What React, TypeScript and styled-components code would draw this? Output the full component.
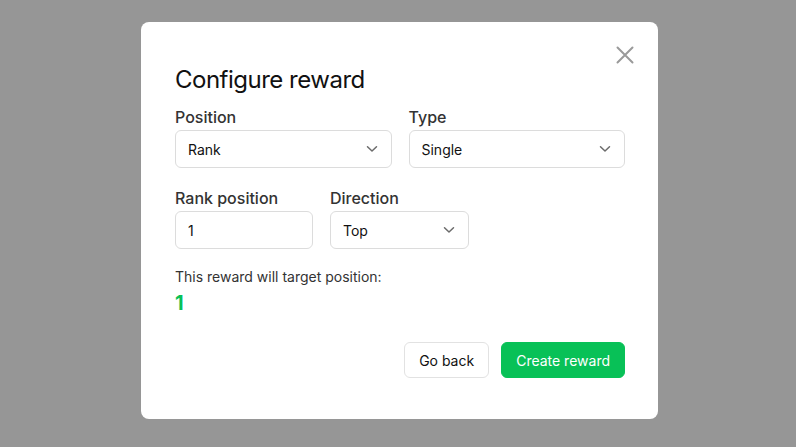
import styled, { createGlobalStyle } from "styled-components";

const GlobalStyle = createGlobalStyle`
  html, body {
    margin: 0;
    padding: 0;
    height: 100%;
  }
  body {
    font-family: Inter, "Noto Sans", "Liberation Sans", sans-serif;
    -webkit-font-smoothing: antialiased;
  }
  #root {
    height: 100%;
  }
`;

const Chevron = () => (
  <ChevronIcon width="12" height="8" viewBox="0 0 12 8" fill="none">
    <path d="M1.5 1.8 L6 6 L10.5 1.8" stroke="#6b6b6b" strokeWidth="1.5" strokeLinecap="round" strokeLinejoin="round" />
  </ChevronIcon>
);

type SelectProps = { value: string; options: string[] };

const Select = ({ value, options }: SelectProps) => (
  <SelectWrap>
    <NativeSelect defaultValue={value}>
      {options.map((o) => <option key={o}>{o}</option>)}
    </NativeSelect>
    <Chevron />
  </SelectWrap>
);

export default function App() {
  return <Backdrop>
    <GlobalStyle />
    <Modal>
      <CloseButton aria-label="Close">
        <svg width="18" height="18" viewBox="0 0 18 18" fill="none">
          <path d="M1.5 1.5 L16.5 16.5 M16.5 1.5 L1.5 16.5" stroke="#9a9a9a" strokeWidth="2" strokeLinecap="round" />
        </svg>
      </CloseButton>
      <Title>Configure reward</Title>
      <Row $columns="1fr 1fr">
        <Field>
          <Label>Position</Label>
          <Select value="Rank" options={["Rank", "Range", "All"]} />
        </Field>
        <Field>
          <Label>Type</Label>
          <Select value="Single" options={["Single", "Multiple"]} />
        </Field>
      </Row>
      <Row $columns="138px 139px" $top={20}>
        <Field>
          <Label>Rank position</Label>
          <Input defaultValue="1" />
        </Field>
        <Field>
          <Label>Direction</Label>
          <Select value="Top" options={["Top", "Bottom"]} />
        </Field>
      </Row>
      <Summary>This reward will target position:</Summary>
      <Target>1</Target>
      <Actions>
        <Button>Go back</Button>
        <Button $primary>Create reward</Button>
      </Actions>
    </Modal>
  </Backdrop>
}

const Backdrop = styled.div`
  height: 100%;
  background: #969696;
  display: flex;
  align-items: center;
  justify-content: center;
  padding: 0 0 6px 3px;
  box-sizing: border-box;
`;

const Modal = styled.div`
  position: relative;
  width: 517px;
  box-sizing: border-box;
  background: #ffffff;
  border-radius: 8px;
  padding: 43px 33px 41px 34px;
  display: flex;
  flex-direction: column;
`;

const CloseButton = styled.button`
  position: absolute;
  top: 24px;
  right: 24px;
  width: 18px;
  height: 18px;
  box-sizing: content-box;
  padding: 0;
  border: none;
  background: transparent;
  display: flex;
  align-items: center;
  justify-content: center;
  cursor: pointer;
`;

const Title = styled.h2`
  margin: 0 0 12px;
  font-size: 24px;
  line-height: 30px;
  font-weight: 400;
  color: #111111;
  letter-spacing: -0.5px;
`;

const Row = styled.div<{ $columns: string; $top?: number }>`
  display: grid;
  grid-template-columns: ${(p) => p.$columns};
  column-gap: 17px;
  margin-top: ${(p) => p.$top ?? 0}px;
`;

const Field = styled.div`
  display: flex;
  flex-direction: column;
  gap: 3px;
`;

const Label = styled.label`
  font-size: 16px;
  line-height: 20px;
  color: #333333;
  font-weight: 500;
`;

const SelectWrap = styled.div`
  position: relative;
`;

const NativeSelect = styled.select`
  appearance: none;
  width: 100%;
  height: 38px;
  box-sizing: border-box;
  border: 1px solid #dcdcdc;
  border-radius: 6px;
  background: #ffffff;
  padding: 0 36px 0 12px;
  font-family: inherit;
  font-size: 14px;
  color: #111111;
  outline: none;
`;

const ChevronIcon = styled.svg`
  position: absolute;
  right: 14px;
  top: 15px;
  pointer-events: none;
`;

const Input = styled.input`
  width: 100%;
  height: 38px;
  box-sizing: border-box;
  border: 1px solid #dcdcdc;
  border-radius: 6px;
  padding: 0 12px;
  font-family: inherit;
  font-size: 14px;
  color: #111111;
  outline: none;
`;

const Summary = styled.div`
  margin-top: 18px;
  font-size: 14px;
  line-height: 20px;
  color: #333333;
`;

const Target = styled.div`
  margin-top: 4px;
  font-size: 20px;
  line-height: 24px;
  font-weight: 700;
  color: #08c157;
`;

const Actions = styled.div`
  margin-top: 27px;
  display: flex;
  justify-content: flex-end;
  gap: 12px;
`;

const Button = styled.button<{ $primary?: boolean }>`
  height: 36px;
  padding: 0 14px;
  border-radius: 6px;
  font-family: inherit;
  font-size: 14px;
  cursor: pointer;
  border: 1px solid ${(p) => (p.$primary ? "#08c157" : "#e2e2e2")};
  background: ${(p) => (p.$primary ? "#08c157" : "#ffffff")};
  color: ${(p) => (p.$primary ? "#ffffff" : "#111111")};
`;
